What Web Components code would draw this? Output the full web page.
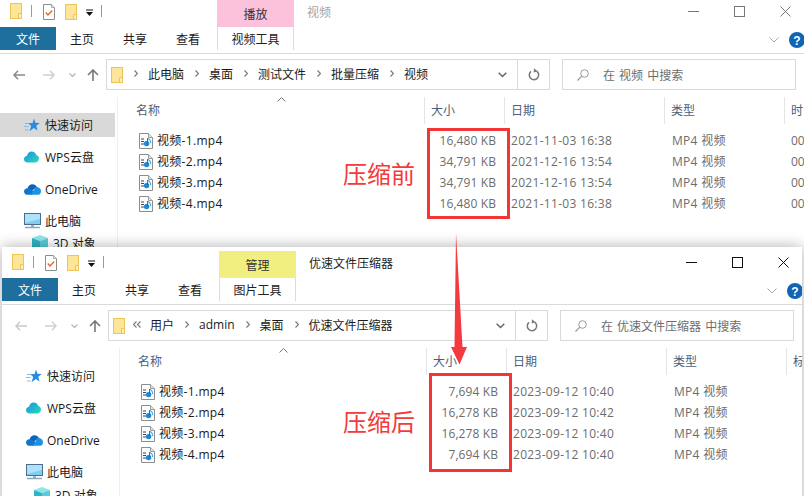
<!DOCTYPE html>
<html lang="zh">
<head>
<meta charset="utf-8">
<title>压缩前后对比</title>
<style>
  html, body { margin: 0; padding: 0; background: #fff; overflow: hidden; }
  body { font: 12px "Open Sans", "Noto Sans CJK SC", sans-serif; color: #1a1a1a; }
</style>
</head>
<body>
<compare-desk>
  <explorer-window style="--win-left:0;--win-top:0;--win-width:804px;--win-height:247px;--win-pad:0px"
    context="播放" context-color="#fcc2dc" tool="视频工具" caption="视频" search="在 视频 中搜索" extra-col="时">
    <path-crumb slot="crumbs">此电脑</path-crumb>
    <path-crumb slot="crumbs">桌面</path-crumb>
    <path-crumb slot="crumbs">测试文件</path-crumb>
    <path-crumb slot="crumbs">批量压缩</path-crumb>
    <path-crumb slot="crumbs" last>视频</path-crumb>
    <nav-item slot="nav" icon="star" selected>快速访问</nav-item>
    <nav-item slot="nav" icon="wps">WPS云盘</nav-item>
    <nav-item slot="nav" icon="onedrive">OneDrive</nav-item>
    <nav-item slot="nav" icon="pc">此电脑</nav-item>
    <nav-item slot="nav" icon="cube" indent style="margin-top:-10px">3D 对象</nav-item>
    <file-row slot="files" name="视频-1.mp4" size="16,480 KB" date="2021-11-03 16:38" extra="00"></file-row>
    <file-row slot="files" name="视频-2.mp4" size="34,791 KB" date="2021-12-16 13:54" extra="00"></file-row>
    <file-row slot="files" name="视频-3.mp4" size="34,791 KB" date="2021-12-16 13:54" extra="00"></file-row>
    <file-row slot="files" name="视频-4.mp4" size="16,480 KB" date="2021-11-03 16:38" extra="00"></file-row>
  </explorer-window>

  <explorer-window active style="--win-left:2px;--win-top:247px;--win-width:800px;--win-height:260px;--win-pad:4px"
    context="管理" context-color="#f1ef80" tool="图片工具" caption="优速文件压缩器" search="在 优速文件压缩器 中搜索" extra-col="标" overflowed>
    <path-crumb slot="crumbs">用户</path-crumb>
    <path-crumb slot="crumbs">admin</path-crumb>
    <path-crumb slot="crumbs">桌面</path-crumb>
    <path-crumb slot="crumbs" last>优速文件压缩器</path-crumb>
    <nav-item slot="nav" icon="star">快速访问</nav-item>
    <nav-item slot="nav" icon="wps">WPS云盘</nav-item>
    <nav-item slot="nav" icon="onedrive">OneDrive</nav-item>
    <nav-item slot="nav" icon="pc">此电脑</nav-item>
    <nav-item slot="nav" icon="cube" indent style="margin-top:-9px">3D 对象</nav-item>
    <file-row slot="files" name="视频-1.mp4" size="7,694 KB" date="2023-09-12 10:40"></file-row>
    <file-row slot="files" name="视频-2.mp4" size="16,278 KB" date="2023-09-12 10:42"></file-row>
    <file-row slot="files" name="视频-3.mp4" size="16,278 KB" date="2023-09-12 10:40"></file-row>
    <file-row slot="files" name="视频-4.mp4" size="7,694 KB" date="2023-09-12 10:40"></file-row>
  </explorer-window>

  <red-frame style="left:427px;top:128px;width:83px;height:91px"></red-frame>
  <red-frame style="left:429px;top:373px;width:83px;height:99px"></red-frame>
  <red-note style="left:343px;top:156px">压缩前</red-note>
  <red-note style="left:343px;top:404px">压缩后</red-note>
  <red-arrow></red-arrow>
</compare-desk>

<script>
const ICONS = {
  folder: `<svg width="12" height="16" viewBox="0 0 12 16"><rect x=".5" y=".5" width="11" height="15" fill="#fde69a" stroke="#ecc556"/><path d="M8.5 15.5v-5h3v5z" fill="#fdf0c0" stroke="#ecc556"/></svg>`,
  checkdoc: `<svg width="12" height="16" viewBox="0 0 12 16"><path d="M.5.5h8l3 3v12H.5z" fill="#fff" stroke="#8c8c8c"/><path d="M8.5.5v3h3" fill="#eee" stroke="#aaa"/><path d="M2.8 8.6l2.2 2.3 4.2-4.4" fill="none" stroke="#e8672a" stroke-width="1.5"/></svg>`,
  media: `<svg width="14" height="16" viewBox="0 0 14 16"><path d="M.5.5h9l4 4v11H.5z" fill="#fbfcfd" stroke="#8d8d8d"/><path d="M9.5.5v4h4" fill="#e4e4e4" stroke="#9a9a9a"/><path d="M2 6h3M2 8.5h3M2 11h3" stroke="#3d4650" stroke-width="1.2"/><circle cx="7.6" cy="10.6" r="2.7" fill="#1e88d8"/><path d="M8.8 5.5c2.2.8 3 2.3 2.8 4.6" fill="none" stroke="#49aee8" stroke-width="1.2"/><path d="M8.6 5v5" stroke="#1668b4" stroke-width="1"/></svg>`,
  star: `<svg width="16" height="15" viewBox="0 0 16 15"><path d="M10 .5l1.400 4.200 4.400.3-3.500 2.800 1.200 4.700-3.700-2.600-4.300 3.300 1.700-5.200-3-2.700 4.400-.2z" fill="#2a8be0"/><path d="M1 5.500h4M0 8.500h4.500M1 12h3.500" stroke="#7dbcee" stroke-width="1.200"/></svg>`,
  wps: `<svg width="15" height="12" viewBox="0 0 15 12"><defs><linearGradient id="w" x1="0" y1="0" x2="1" y2="1"><stop offset="0" stop-color="#1b8fe6"/><stop offset="1" stop-color="#29dcb8"/></linearGradient></defs><path d="M3.400 11.500C1.500 11.500 0 10.200 0 8.300c0-1.700 1.200-3 2.900-3.200C3.400 2.300 5.300.5 7.700.5c2.200 0 4 1.400 4.500 3.500 1.600.3 2.800 1.700 2.800 3.500 0 2.200-1.700 4-3.900 4z" fill="url(#w)"/></svg>`,
  onedrive: `<svg width="17" height="11" viewBox="0 0 17 11"><path d="M3.500 4.500C4 2 6 .3 8.500.3c1.900 0 3.500 1 4.300 2.700L7 7.500z" fill="#0c63b8"/><path d="M3.600 10.800C1.600 10.800 0 9.300 0 7.400c0-1.800 1.500-3.200 3.400-3.100 1.300-.2 2.600.2 3.500 1L10.500 8 8 10.800z" fill="#1077cf"/><path d="M6.700 10.800l5.300-8c.6-.1 1.100 0 1.500.2 2 .6 3.500 2.200 3.500 4.400 0 2-1.500 3.400-3.400 3.400z" fill="#1c93e2"/></svg>`,
  pc: `<svg width="17" height="16" viewBox="0 0 17 16"><rect x=".5" y=".5" width="16" height="11" fill="#7fcdf5" stroke="#4a6f8c"/><path d="M1 1h15v5L1 10z" fill="#aee2fb"/><path d="M7 12h3v2H7z" fill="#9fb5c6"/><path d="M1 14.500h15" stroke="#8ea6b8" stroke-width="1.500"/></svg>`,
  cube: `<svg width="16" height="16" viewBox="0 0 16 16"><path d="M8 0l8 3-8 3-8-3z" fill="#8fe6e8"/><path d="M0 3l8 3v10l-8-3z" fill="#2eb4c9"/><path d="M16 3l-8 3v10l8-3z" fill="#58cdd9"/></svg>`
};

const CHEVRON = `<svg width="4" height="7" viewBox="0 0 4 7"><path d="M.5.500l3 3-3 3" fill="none" stroke="#777" stroke-width="1.200"/></svg>`;
const DOUBLE_CHEVRON = `<svg width="8" height="7" viewBox="0 0 8 7"><path d="M3.500.500l-3 3 3 3M7.500.500l-3 3 3 3" fill="none" stroke="#777" stroke-width="1.100"/></svg>`;

class AppIcon extends HTMLElement {
  connectedCallback() {
    if (this.shadowRoot) return;
    this.attachShadow({ mode: "open" });
    this.shadowRoot.innerHTML = `
      <style>:host { display: inline-flex; flex: none; } svg { display: block; }</style>
      ${ICONS[this.getAttribute("name")] || ""}`;
  }
}
customElements.define("app-icon", AppIcon);

class CompareDesk extends HTMLElement {
  constructor() {
    super();
    this.attachShadow({ mode: "open" });
    this.shadowRoot.innerHTML = `
      <style>
        :host { display: block; position: relative; width: 804px; height: 496px; overflow: hidden; background: #fff; }
      </style>
      <slot></slot>`;
  }
}
customElements.define("compare-desk", CompareDesk);

class ExplorerWindow extends HTMLElement {
  connectedCallback() {
    if (this.shadowRoot) return;
    const a = (n) => this.getAttribute(n) || "";
    const active = this.hasAttribute("active");
    const ctl = active ? "#111" : "#777";
    const backCol = active ? "#c9c9c9" : "#8a8a8a";
    // 路径太长时资源管理器会把前面折叠成 «
    const lead = this.hasAttribute("overflowed")
      ? `<span class="lead" style="margin:0 9px 0 8px">${DOUBLE_CHEVRON}</span>`
      : `<span class="lead" style="margin:0 10px 0 11px">${CHEVRON}</span>`;
    this.attachShadow({ mode: "open" });
    this.shadowRoot.innerHTML = `
      <style>
        :host {
          display: flex;
          flex-direction: column;
          position: absolute;
          left: var(--win-left);
          top: var(--win-top);
          width: var(--win-width);
          height: var(--win-height);
          padding-top: var(--win-pad);
          box-sizing: border-box;
          background: #fff;
          overflow: hidden;
          color: #1a1a1a;
          font: 12px "Open Sans", "Noto Sans CJK SC", sans-serif;
        }
        :host([active]) { overflow: visible; box-shadow: 0 0 14px rgba(0,0,0,.32); }
        .clip { display: flex; flex-direction: column; flex: 1; min-height: 0; overflow: hidden; }
        .titlebar { display: flex; height: 27px; flex: none; }
        .qat { display: flex; width: 217px; flex: none; padding: 3px 0 0 10px; box-sizing: border-box; }
        .qat i { width: 1px; height: 12px; background: #9a9a9a; margin-top: 2px; }
        .context { width: 77px; flex: none; text-align: center; line-height: 29px; color: #333; background: ${a("context-color")}; }
        .caption { margin-left: 13px; line-height: 25px; color: ${active ? "#222" : "#a5a5a5"}; }
        .controls { margin-left: auto; display: flex; gap: 35px; padding: 6px 13px 0 0; align-items: flex-start; }
        .tabs { display: flex; height: 23px; flex: none; line-height: 25px; }
        .file-tab { width: 56px; background: #1f6f9e; color: #fff; text-align: center; }
        .tab { margin-left: 14px; width: 39px; }
        .tool { margin-left: 2px; width: 77px; box-sizing: border-box; border: 1px solid #dcdcdc; border-width: 0 1px; text-align: center; color: #222; }
        .help { margin-left: auto; display: flex; align-items: center; gap: 10px; margin-right: -1px; padding-top: 2px; }
        .rule { height: 4px; flex: none; border-bottom: 1px solid #dadada; box-sizing: border-box; }
        .addressbar { display: flex; height: 36px; flex: none; padding: 5px 8px 0 0; box-sizing: border-box; }
        .navs { width: 106px; flex: none; display: flex; align-items: center; padding-left: 13px; box-sizing: border-box; }
        .address { flex: 1; min-width: 0; display: flex; align-items: center; border: 1px solid #d9d9d9; box-sizing: border-box; padding-left: 4px; }
        .crumbs { display: flex; align-items: center; flex: 1; min-width: 0; overflow: hidden; padding-bottom: 2px; }
        .lead { display: flex; flex: none; }
        .down { width: 30px; display: flex; justify-content: center; }
        .refresh { width: 31px; height: 100%; border-left: 1px solid #d9d9d9; display: flex; align-items: center; justify-content: center; }
        .search { width: 234px; flex: none; margin-left: 12px; display: flex; align-items: center; border: 1px solid #d9d9d9; box-sizing: border-box; padding-left: 14px; color: #6d6d6d; }
        .search span { margin-left: 14px; white-space: pre; word-spacing: 1px; }
        .body { flex: 1; min-height: 0; display: flex; }
        .sidebar { width: 118px; flex: none; margin-top: 7px; padding-top: 16px; box-sizing: border-box; border-right: 1px solid #efefef; display: flex; flex-direction: column; gap: 8px; overflow: hidden; }
        .main { flex: 1; min-width: 0; overflow: hidden; }
        .head { display: grid; grid-template-columns: 306px 80px 160px 120px 1fr; height: 27px; margin-top: 7px; color: #4c607a; line-height: 27px; }
        .head div { padding-left: 6px; border-left: 1px solid #e5e5e5; white-space: nowrap; }
        .head .name { border-left: 0; padding-left: 18px; display: flex; }
        .sort { margin: 0 0 0 117px; }
        .files { display: block; margin-top: 6px; }
      </style>
      <div class="clip">
        <div class="titlebar">
          <div class="qat">
            <app-icon name="folder"></app-icon>
            <i style="margin-left:9px"></i>
            <app-icon name="checkdoc" style="margin-left:11px;margin-top:1px"></app-icon>
            <app-icon name="folder" style="margin-left:10px;margin-top:1px"></app-icon>
            <svg width="7" height="7" viewBox="0 0 7 7" style="margin:6px 0 0 9px"><path d="M0 1h7" stroke="#111"/><path d="M0 3h7L3.500 7z" fill="#111"/></svg>
            <i style="margin-left:8px"></i>
          </div>
          <div class="context">${a("context")}</div>
          <div class="caption">${a("caption")}</div>
          <div class="controls">
            <svg width="11" height="11" viewBox="0 0 11 11"><path d="M0 5.500h11" stroke="${ctl}"/></svg>
            <svg width="11" height="11" viewBox="0 0 11 11"><rect x=".5" y=".5" width="10" height="10" fill="none" stroke="${ctl}"/></svg>
            <svg width="11" height="11" viewBox="0 0 11 11"><path d="M.5.500l10 10M10.500.500l-10 10" stroke="${ctl}"/></svg>
          </div>
        </div>
        <div class="tabs">
          <div class="file-tab">文件</div>
          <div class="tab">主页</div>
          <div class="tab">共享</div>
          <div class="tab">查看</div>
          <div class="tool">${a("tool")}</div>
          <div class="help">
            <svg width="10" height="6" viewBox="0 0 10 6"><path d="M.5.500L5 5 9.500.500" fill="none" stroke="#aaa"/></svg>
            <svg width="16" height="16" viewBox="0 0 16 16"><circle cx="8" cy="8" r="8" fill="#0f64b4"/><text x="8" y="12.500" text-anchor="middle" font-family="Liberation Sans, sans-serif" font-weight="700" font-size="12" fill="#fff">?</text></svg>
          </div>
        </div>
        <div class="rule"></div>
        <div class="addressbar">
          <div class="navs">
            <svg width="12" height="10" viewBox="0 0 12 10"><path d="M12 5H1M5 .8L1 5l4 4.200" fill="none" stroke="${backCol}" stroke-width="1.500"/></svg>
            <svg width="12" height="10" viewBox="0 0 12 10" style="margin-left:18px"><path d="M0 5h11M7 .8L11 5 7 9.200" fill="none" stroke="#cfcfcf" stroke-width="1.500"/></svg>
            <svg width="7" height="4" viewBox="0 0 7 4" style="margin-left:14px"><path d="M.5.500L3.500 3.500 6.500.500" fill="none" stroke="#b5b5b5" stroke-width="1.200"/></svg>
            <svg width="12" height="12" viewBox="0 0 12 12" style="margin-left:11px"><path d="M6 12V1M1 6l5-5 5 5" fill="none" stroke="#777" stroke-width="1.600"/></svg>
          </div>
          <div class="address">
            <app-icon name="folder"></app-icon>
            <div class="crumbs">${lead}<slot name="crumbs"></slot></div>
            <div class="down"><svg width="9" height="6" viewBox="0 0 9 6"><path d="M.7.700L4.500 4.500 8.300.700" fill="none" stroke="#666" stroke-width="1.500"/></svg></div>
            <div class="refresh"><svg width="12" height="13" viewBox="0 0 12 13"><path d="M8.700 3.200A4.700 4.700 0 1 1 3 3.400" fill="none" stroke="#777" stroke-width="1.500"/><path d="M6 .2l3.500 3-3.800 1.300z" fill="#777"/></svg></div>
          </div>
          <div class="search">
            <svg width="12" height="12" viewBox="0 0 12 12"><circle cx="7.500" cy="4.500" r="3.800" fill="none" stroke="#999"/><path d="M4.800 7.200L.5 11.500" stroke="#999" stroke-width="1.200"/></svg>
            <span>${a("search")}</span>
          </div>
        </div>
        <div class="body">
          <div class="sidebar"><slot name="nav"></slot></div>
          <div class="main">
            <div class="head">
              <div class="name"><span>名称</span>
                <svg class="sort" width="9" height="5" viewBox="0 0 9 5"><path d="M.5 4.500L4.500.5l4 4" fill="none" stroke="#777"/></svg>
              </div>
              <div>大小</div><div>日期</div><div>类型</div><div>${a("extra-col")}</div>
            </div>
            <div class="files"><slot name="files"></slot></div>
          </div>
        </div>
      </div>`;
  }
}
customElements.define("explorer-window", ExplorerWindow);

class PathCrumb extends HTMLElement {
  constructor() {
    super();
    this.attachShadow({ mode: "open" });
    this.shadowRoot.innerHTML = `
      <style>
        :host { display: inline-flex; align-items: center; flex: none; white-space: nowrap; color: #1a1a1a; }
        svg { margin: 0 10px 0 11px; }
        :host([last]) svg { display: none; }
      </style>
      <slot></slot>
      ${CHEVRON}`;
  }
}
customElements.define("path-crumb", PathCrumb);

class NavItem extends HTMLElement {
  connectedCallback() {
    if (this.shadowRoot) return;
    this.attachShadow({ mode: "open" });
    this.shadowRoot.innerHTML = `
      <style>
        :host { display: flex; flex: none; align-items: center; height: 24px; margin-right: 2px; padding-left: 24px; box-sizing: border-box; white-space: nowrap; color: #1a1a1a; }
        :host([selected]) { background: #d9d9d9; }
        :host([indent]) { padding-left: 32px; }
        .ico { width: 21px; flex: none; display: flex; }
      </style>
      <span class="ico"><app-icon name="${this.getAttribute("icon")}"></app-icon></span>
      <slot></slot>`;
  }
}
customElements.define("nav-item", NavItem);

class FileRow extends HTMLElement {
  connectedCallback() {
    if (this.shadowRoot) return;
    const a = (n) => this.getAttribute(n) || "";
    this.attachShadow({ mode: "open" });
    this.shadowRoot.innerHTML = `
      <style>
        :host { display: grid; grid-template-columns: 306px 80px 160px 120px 1fr; height: 21px; line-height: 21px; color: #6d6d6d; white-space: nowrap; letter-spacing: .3px; }
        .name { display: flex; align-items: center; padding-left: 21px; color: #1a1a1a; gap: 4px; }
        .size { text-align: right; padding-right: 8px; letter-spacing: .1px; }
        .date { padding-left: 7px; }
        .type { padding-left: 8px; }
        .extra { padding-left: 7px; letter-spacing: 0; }
      </style>
      <div class="name"><app-icon name="media"></app-icon>${a("name")}</div>
      <div class="size">${a("size")}</div>
      <div class="date">${a("date")}</div>
      <div class="type">MP4 视频</div>
      <div class="extra">${a("extra")}</div>`;
  }
}
customElements.define("file-row", FileRow);

class RedFrame extends HTMLElement {
  constructor() {
    super();
    this.attachShadow({ mode: "open" });
    this.shadowRoot.innerHTML = `
      <style>
        :host { display: block; position: absolute; box-sizing: border-box; border: 3px solid #f43535; }
      </style>`;
  }
}
customElements.define("red-frame", RedFrame);

class RedNote extends HTMLElement {
  constructor() {
    super();
    this.attachShadow({ mode: "open" });
    this.shadowRoot.innerHTML = `
      <style>
        :host { display: block; position: absolute; color: #f43b3b; font: 24px/34px "Noto Sans CJK SC", sans-serif; white-space: nowrap; }
      </style>
      <slot></slot>`;
  }
}
customElements.define("red-note", RedNote);

class RedArrow extends HTMLElement {
  constructor() {
    super();
    this.attachShadow({ mode: "open" });
    this.shadowRoot.innerHTML = `
      <style>
        :host { display: block; position: absolute; left: 0; top: 0; width: 804px; height: 496px; pointer-events: none; }
      </style>
      <svg width="804" height="496"><path d="M456 233L454.500 347H451L459.500 364.500L467 347H462.500z" fill="#f53a3f"/></svg>`;
  }
}
customElements.define("red-arrow", RedArrow);
</script>
</body>
</html>
